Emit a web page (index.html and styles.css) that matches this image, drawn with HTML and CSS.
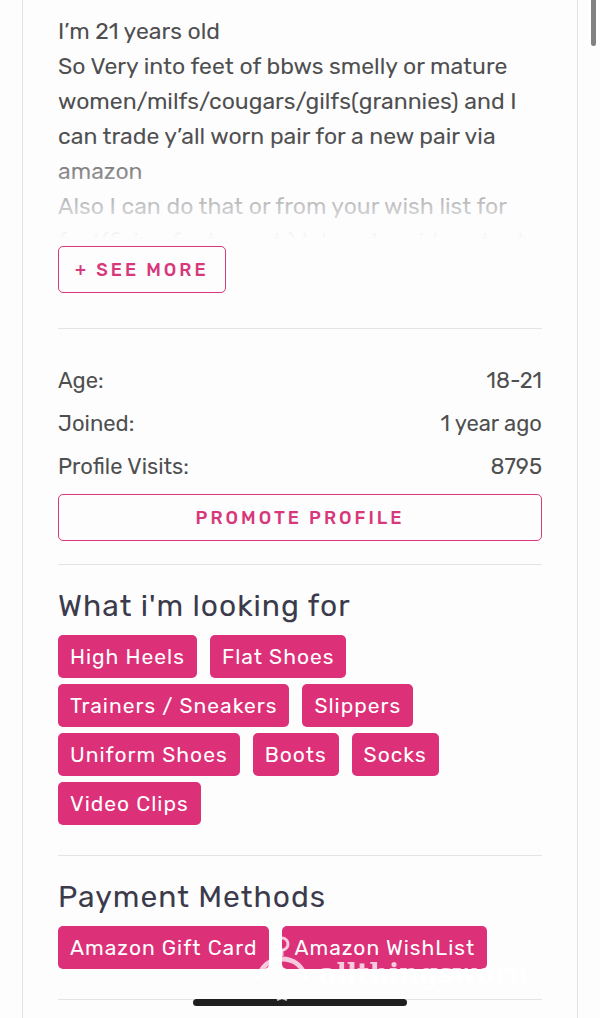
FILE: index.html
```
<!DOCTYPE html>
<html lang="en">
<head>
  <meta charset="UTF-8">
  <meta name="viewport" content="width=device-width, initial-scale=1.0">
  <title>Profile</title>
  <link rel="stylesheet" href="styles.css">
</head>
<body>

<main class="profile">
  <section class="section about">
    <div class="about-text">
      <p>I’m 21 years old</p>
      <p>So Very into feet of bbws smelly or mature women/milfs/cougars/gilfs(grannies) and I can trade y’all worn pair for a new pair via amazon</p>
      <p>Also I can do that or from your wish list for feet(fixing for to sent ) I do extra side extra to</p>
    </div>
    <button type="button" class="btn">+ See more</button>
  </section>

  <section class="section stats">
    <dl class="stat-list">
      <div class="stat">
        <dt>Age:</dt>
        <dd>18-21</dd>
      </div>
      <div class="stat">
        <dt>Joined:</dt>
        <dd>1 year ago</dd>
      </div>
      <div class="stat">
        <dt>Profile Visits:</dt>
        <dd>8795</dd>
      </div>
    </dl>
    <button type="button" class="btn btn-block">Promote profile</button>
  </section>

  <section class="section tagged">
    <h2>What i'm looking for</h2>
    <ul class="tags">
      <li>High Heels</li>
      <li>Flat Shoes</li>
      <li>Trainers / Sneakers</li>
      <li>Slippers</li>
      <li>Uniform Shoes</li>
      <li>Boots</li>
      <li>Socks</li>
      <li>Video Clips</li>
    </ul>
  </section>

  <section class="section tagged">
    <h2>Payment Methods</h2>
    <ul class="tags">
      <li>Amazon Gift Card</li>
      <li>Amazon WishList</li>
    </ul>
  </section>
</main>

<div class="scrollbar"></div>
<div class="home-bar"></div>

<!-- Site watermark -->
<div class="watermark">
  <svg width="58" height="66" viewBox="0 0 58 66" fill="none" stroke="currentColor">
    <circle cx="29" cy="9" r="6" stroke-width="3"/>
    <path d="M29 15v6" stroke-width="3"/>
    <path d="M5 44C8 31 17 24 29 24s21 7 24 20" stroke-width="5"/>
    <path d="M24 65l5-2 5 2" stroke-width="2"/>
  </svg>
  <span>allthingsworn</span>
</div>

</body>
</html>
```
FILE: styles.css
```
* {
  box-sizing: border-box;
}

body {
  font-family: Rubik, Roboto, sans-serif;
  margin: 0;
  background-color: #fdfdfe;
  color: #4f4f50;
  font-size: 23px;
  line-height: 35px;
  height: 100vh;
  overflow: hidden;
}

p, dl, dd, ul, h2 {
  margin: 0;
  padding: 0;
}

.profile {
  min-height: 100vh;
  margin: 0 22px;
  padding: 0 35px;
  border-left: 1px solid #dfe2e8;
  border-right: 1px solid #dfe2e8;
}

.section {
  border-bottom: 1px solid #e1e3e6;
}

/* About */
.about {
  padding: 14px 0 35px;
}

.about-text {
  position: relative;
  height: 225px;
  margin-bottom: 7px;
  overflow: hidden;
}

/* Fades the text out above the button */
.about-text::after {
  content: "";
  position: absolute;
  left: 0;
  right: 0;
  bottom: 0;
  height: 100px;
  background: linear-gradient(rgba(253, 253, 254, 0), #fdfdfe);
}

.btn {
  display: block;
  height: 47px;
  padding: 0 16px;
  border: 1px solid #d7387b;
  border-radius: 5px;
  background: none;
  color: #d7387b;
  font-family: inherit;
  font-size: 18px;
  font-weight: 500;
  letter-spacing: 3px;
  text-transform: uppercase;
  cursor: pointer;
}

.btn-block {
  width: 100%;
}

/* Stats */
.stats {
  padding: 30px 0 23px;
}

.stat {
  display: flex;
  justify-content: space-between;
  padding: 4px 0;
  font-size: 22px;
}

.stat-list {
  margin-bottom: 6px;
}

/* Tags */
.tagged {
  padding: 22px 0 30px;
}

h2 {
  margin-bottom: 9px;
  color: #3b3b4c;
  font-size: 30px;
  font-weight: 400;
  line-height: 39px;
  letter-spacing: 1px;
}

.tags {
  display: flex;
  flex-wrap: wrap;
  gap: 6px 13px;
  list-style: none;
}

.tags li {
  padding: 4px 12px;
  border-radius: 5px;
  background-color: #dc3078;
  color: white;
  font-size: 21px;
  letter-spacing: 1px;
}

/* Overlays */
.watermark {
  position: fixed;
  left: 253px;
  bottom: 17px;
  display: flex;
  align-items: flex-end;
  gap: 8px;
  color: rgba(255, 255, 255, 0.75);
  font-family: "DejaVu Serif", serif;
  font-size: 27px;
  font-weight: bold;
}

.watermark span {
  padding-bottom: 11px;
  line-height: 32px;
}

.scrollbar {
  position: fixed;
  top: 0;
  right: 4px;
  width: 5px;
  height: 46px;
  border-radius: 0 0 3px 3px;
  background-color: #818181;
}

.home-bar {
  position: fixed;
  left: 50%;
  bottom: 12px;
  width: 214px;
  height: 7px;
  border-radius: 4px;
  background-color: #1f1f1f;
  transform: translateX(-50%);
}
```
